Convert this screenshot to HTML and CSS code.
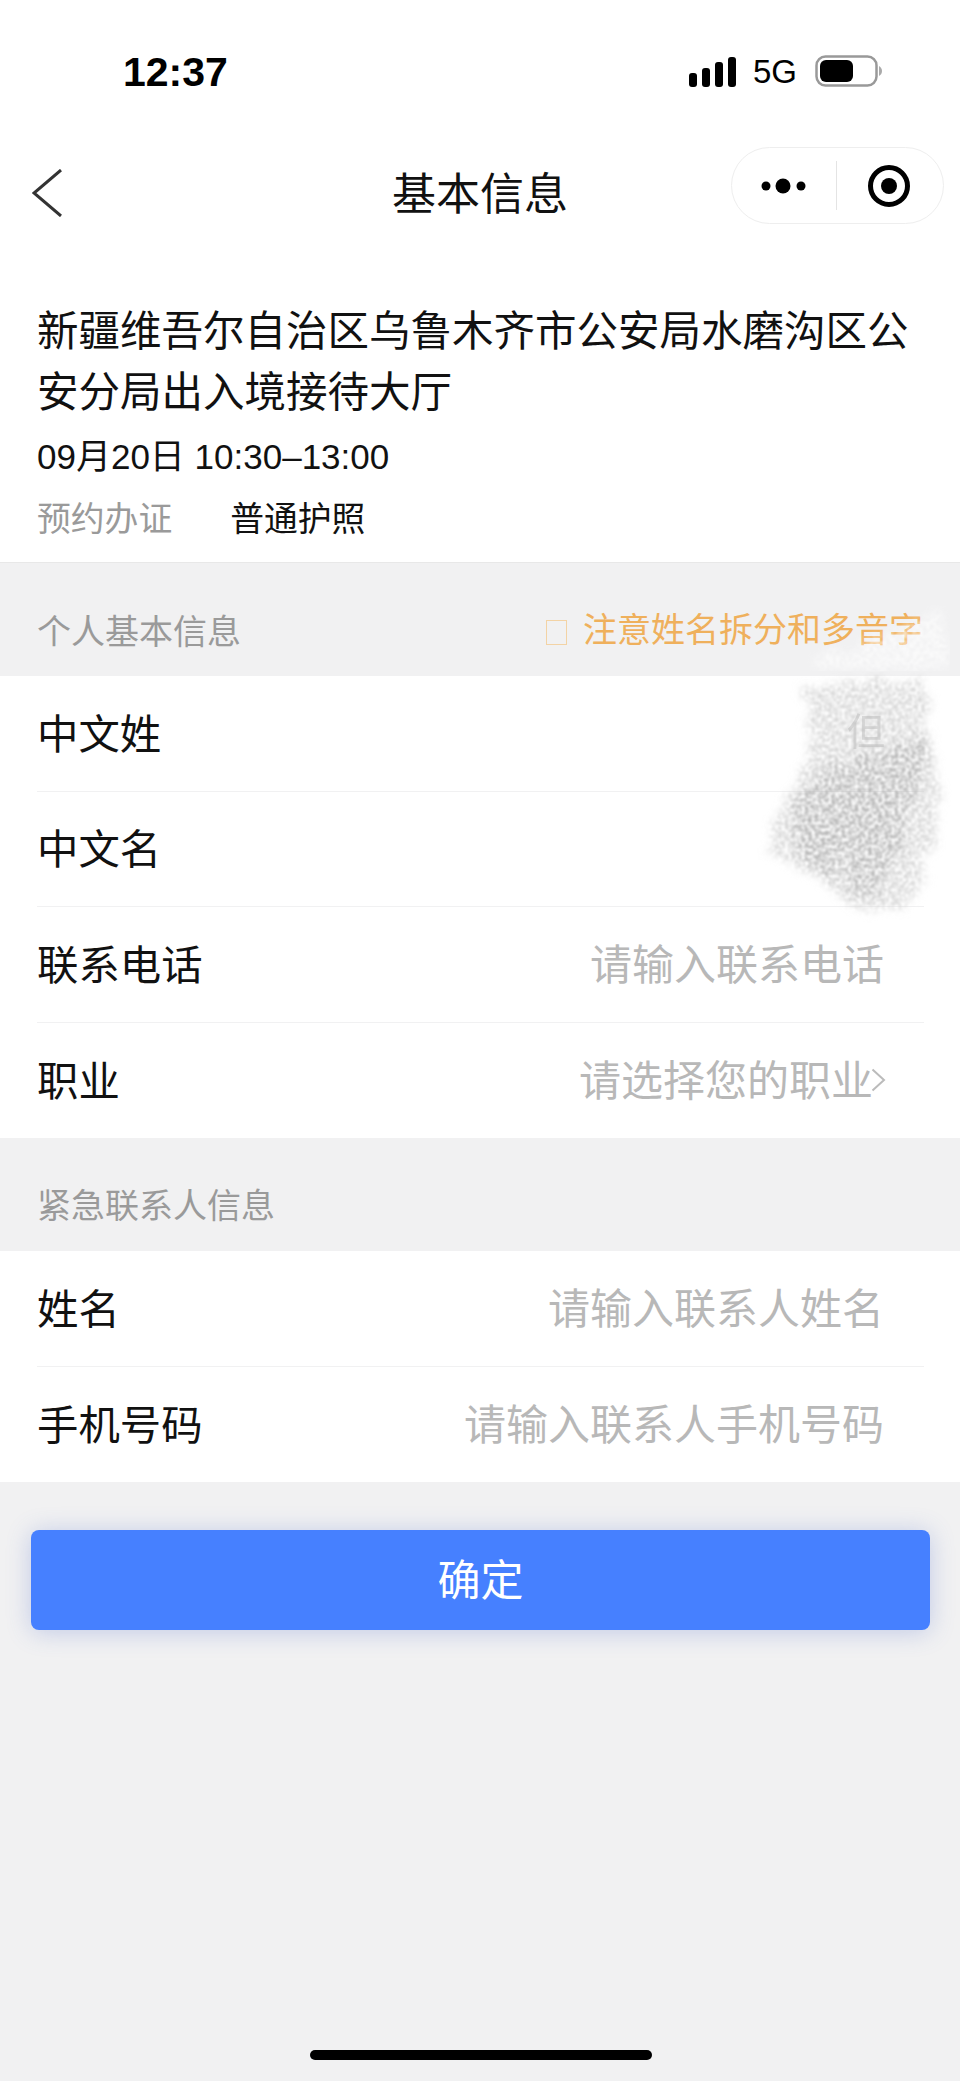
FILE: index.html
```html
<!DOCTYPE html>
<html lang="zh-CN">
<head>
    <meta charset="UTF-8">
    <meta name="viewport" content="width=device-width, initial-scale=1.0">
    <title>基本信息</title>
    <link rel="stylesheet" href="styles.css">
</head>
<body>
    <div class="top">
        <!-- 状态栏 -->
        <div class="status">
            <span class="time">12:37</span>
            <div class="status-right">
                <svg class="signal" width="47" height="30" viewBox="0 0 47 30">
                    <rect x="0" y="16" width="8" height="14" rx="3"/>
                    <rect x="13" y="11" width="8" height="19" rx="3"/>
                    <rect x="26" y="5" width="8" height="25" rx="3"/>
                    <rect x="39" y="0" width="8" height="30" rx="3"/>
                </svg>
                <span class="net">5G</span>
                <svg class="battery" width="67" height="32" viewBox="0 0 67 32">
                    <rect x="1.5" y="1.5" width="60" height="29" rx="9" fill="none" stroke="#999" stroke-width="2.5"/>
                    <rect x="5" y="5" width="33" height="22" rx="6" fill="#000"/>
                    <path d="M64 11c2 1 3 3 3 5s-1 4-3 5z" fill="#aaa"/>
                </svg>
            </div>
        </div>

        <!-- 导航栏 -->
        <div class="nav">
            <svg class="back" width="30" height="48" viewBox="0 0 30 48">
                <path d="M29 1L2 24l27 23" fill="none" stroke="#333" stroke-width="3"/>
            </svg>
            <div class="nav-title">基本信息</div>
            <div class="capsule">
                <svg width="48" height="20" viewBox="0 0 48 20">
                    <circle cx="6" cy="10" r="4.5"/>
                    <circle cx="23" cy="10" r="7.5"/>
                    <circle cx="41" cy="10" r="4.5"/>
                </svg>
                <span class="capsule-line"></span>
                <svg width="46" height="46" viewBox="0 0 46 46">
                    <circle cx="23" cy="23" r="18.5" fill="none" stroke="#000" stroke-width="5"/>
                    <circle cx="23" cy="23" r="8"/>
                </svg>
            </div>
        </div>

        <!-- 预约信息 -->
        <div class="info">
            <div class="info-name">新疆维吾尔自治区乌鲁木齐市公安局水磨沟区公安分局出入境接待大厅</div>
            <div class="info-date">09月20日 10:30–13:00</div>
            <div class="info-type"><span class="info-key">预约办证</span><span>普通护照</span></div>
        </div>
    </div>

    <div class="section-head first">
        <span>个人基本信息</span>
        <span class="notice"><i class="notice-box"></i>注意姓名拆分和多音字</span>
    </div>
    <div class="group">
        <div class="row"><label>中文姓</label></div>
        <div class="row"><label>中文名</label></div>
        <div class="row"><label>联系电话</label><span class="holder">请输入联系电话</span></div>
        <div class="row last"><label>职业</label><span class="holder pick">请选择您的职业<svg width="15" height="24" viewBox="0 0 15 24"><path d="M1.5 1.5L13 12 1.5 22.500" fill="none" stroke="#bbb" stroke-width="2"/></svg></span></div>
    </div>

    <div class="section-head">
        <span>紧急联系人信息</span>
    </div>
    <div class="group">
        <div class="row"><label>姓名</label><span class="holder">请输入联系人姓名</span></div>
        <div class="row last"><label>手机号码</label><span class="holder">请输入联系人手机号码</span></div>
    </div>

    <button class="ok">确定</button>

    <!-- 涂抹遮挡 -->
    <svg class="smudge" width="200" height="260" viewBox="0 0 200 260">
        <defs>
            <filter id="grain" x="-10%" y="-10%" width="120%" height="120%">
                <feTurbulence type="fractalNoise" baseFrequency="0.05" numOctaves="3" seed="11" result="low"/>
                <feDisplacementMap in="SourceGraphic" in2="low" scale="24" result="d"/>
                <feGaussianBlur in="d" stdDeviation="4" result="soft"/>
                <feTurbulence type="fractalNoise" baseFrequency="0.3" numOctaves="4" seed="7" result="n"/>
                <feColorMatrix in="n" type="matrix" values="0 0 0 0 0  0 0 0 0 0  0 0 0 0 0  0 0 0 2.6 -0.8" result="a"/>
                <feComposite in="soft" in2="a" operator="in"/>
                <feGaussianBlur stdDeviation="1.1"/>
            </filter>
        </defs>
        <g filter="url(#grain)">
            <path d="M50 14l55-6 68-2 2 24 4 40 10 58-10 52-16 44-42 18-24-10-28-24-42-22-14-4 12-36 28-56 8-44z" fill="#d6d6d6"/>
            <path d="M50 110l60-28 66-18-8 56-40 26-30 30-20 30-26-14-12-30z" fill="#b4b4b4"/>
            <path d="M110 150l50-30-10 50-26 50-26 8-8-30z" fill="#b4b4b4"/>
        </g>
    </svg>
    <span class="ghost">但</span>
    <svg class="smudge-top" width="150" height="66" viewBox="0 0 150 66">
        <defs>
            <filter id="grain2" x="-10%" y="-10%" width="120%" height="120%">
                <feTurbulence type="fractalNoise" baseFrequency="0.05" numOctaves="3" seed="5" result="low"/>
                <feDisplacementMap in="SourceGraphic" in2="low" scale="20" result="d"/>
                <feGaussianBlur in="d" stdDeviation="4" result="soft"/>
                <feTurbulence type="fractalNoise" baseFrequency="0.3" numOctaves="3" seed="3" result="n"/>
                <feColorMatrix in="n" type="matrix" values="0 0 0 0 0  0 0 0 0 0  0 0 0 0 0  0 0 0 2.6 -0.7" result="a"/>
                <feComposite in="soft" in2="a" operator="in"/>
                <feGaussianBlur stdDeviation="1.2"/>
            </filter>
        </defs>
        <path d="M8 52L80 34l60-30 8 24 2 38H16z" fill="#fff" filter="url(#grain2)"/>
    </svg>

    <div class="home-bar"></div>
</body>
</html>
```

FILE: styles.css
```css
* {
    box-sizing: border-box;
}
body {
    margin: 0;
    height: 2081px;
    position: relative;
    overflow: hidden;
    background-color: #f1f1f2;
    color: #111;
    font-family: "Liberation Sans", "Noto Sans CJK SC", sans-serif;
}
.top {
    background: white;
    border-bottom: 1px solid #e8e8e8;
    height: 563px;
}

/* 状态栏 */
.status {
    height: 147px;
    padding: 55px 78px 0 123px;
    display: flex;
    justify-content: space-between;
    align-items: flex-start;
}
.time {
    font-size: 41px;
    font-weight: bold;
    line-height: 34px;
    color: #000;
}
.status-right {
    display: flex;
    align-items: center;
    height: 32px;
}
.signal {
    fill: #000;
    margin-top: 2px;
}
.net {
    font-size: 33px;
    line-height: 32px;
    margin: 1px 18px 0 17px;
    color: #000;
}

/* 导航栏 */
.nav {
    height: 92px;
    padding: 0 16px;
    display: grid;
    grid-template-columns: 1fr auto 1fr;
    align-items: center;
}
.back {
    margin-left: 16px;
}
.nav-title {
    font-size: 44px;
    line-height: 60px;
    padding-top: 3px;
}
.capsule {
    justify-self: end;
    align-self: start;
    width: 213px;
    height: 77px;
    border: 1px solid #eee;
    border-radius: 39px;
    display: flex;
    align-items: center;
    padding-left: 28px;
}
.capsule svg {
    flex: none;
}
.capsule-line {
    width: 1px;
    height: 49px;
    background: #e4e4e4;
    margin: 0 29px 0 28px;
}

/* 预约信息 */
.info {
    padding: 62px 30px 0 37px;
}
.info-name {
    font-size: 41.5px;
    line-height: 61px;
}
.info-date {
    font-size: 35px;
    line-height: 50px;
    margin-top: 9px;
}
.info-type {
    font-size: 33.8px;
    line-height: 50px;
    margin-top: 12px;
}
.info-key {
    color: #9a9a9a;
    margin-right: 58px;
}

/* 分组 */
.section-head {
    height: 113px;
    padding: 43px 37px 20px;
    display: flex;
    justify-content: space-between;
    font-size: 34px;
    line-height: 50px;
    color: #9a9a9a;
}
.section-head.first {
    padding: 44px 37px 19px;
}
.notice {
    color: #efb05c;
    font-size: 34px;
    display: flex;
    align-items: center;
    margin-top: -4px;
}
.notice-box {
    width: 21px;
    height: 25px;
    border: 1px solid #f3d3a5;
    margin: 4px 16px 0 0;
}
.group {
    background: white;
    padding: 0 36px 0 37px;
}
.row {
    height: 115.5px;
    padding: 0 40px 5px 0;
    border-bottom: 1px solid #f1f1f2;
    display: flex;
    align-items: center;
    justify-content: space-between;
    font-size: 41.4px;
}
.row.last {
    border-bottom: none;
}
.holder {
    color: #b8b8b8;
    font-size: 42px;
    margin-left: auto;
    display: flex;
    align-items: center;
}
.pick {
    margin-right: -2px;
}
.pick svg {
    margin: 4px 0 0 -2px;
}

/* 按钮 */
.ok {
    display: block;
    width: 899px;
    height: 100px;
    margin: 48px 0 0 31px;
    padding: 0 0 7px;
    border: none;
    border-radius: 8px;
    background-color: #4680ff;
    box-shadow: 0 2px 24px rgba(70, 100, 200, 0.28);
    color: white;
    font-family: inherit;
    font-size: 43px;
}

/* 遮挡 */
.smudge {
    position: absolute;
    left: 752px;
    top: 672px;
}
.ghost {
    position: absolute;
    left: 847px;
    top: 708px;
    font-size: 38px;
    line-height: 48px;
    color: #bbb;
    opacity: 0.5;
}
.smudge-top {
    position: absolute;
    left: 800px;
    top: 605px;
    opacity: 0.7;
}
.home-bar {
    position: absolute;
    left: 310px;
    top: 2050px;
    width: 342px;
    height: 10px;
    border-radius: 5px;
    background: #000;
}
```
